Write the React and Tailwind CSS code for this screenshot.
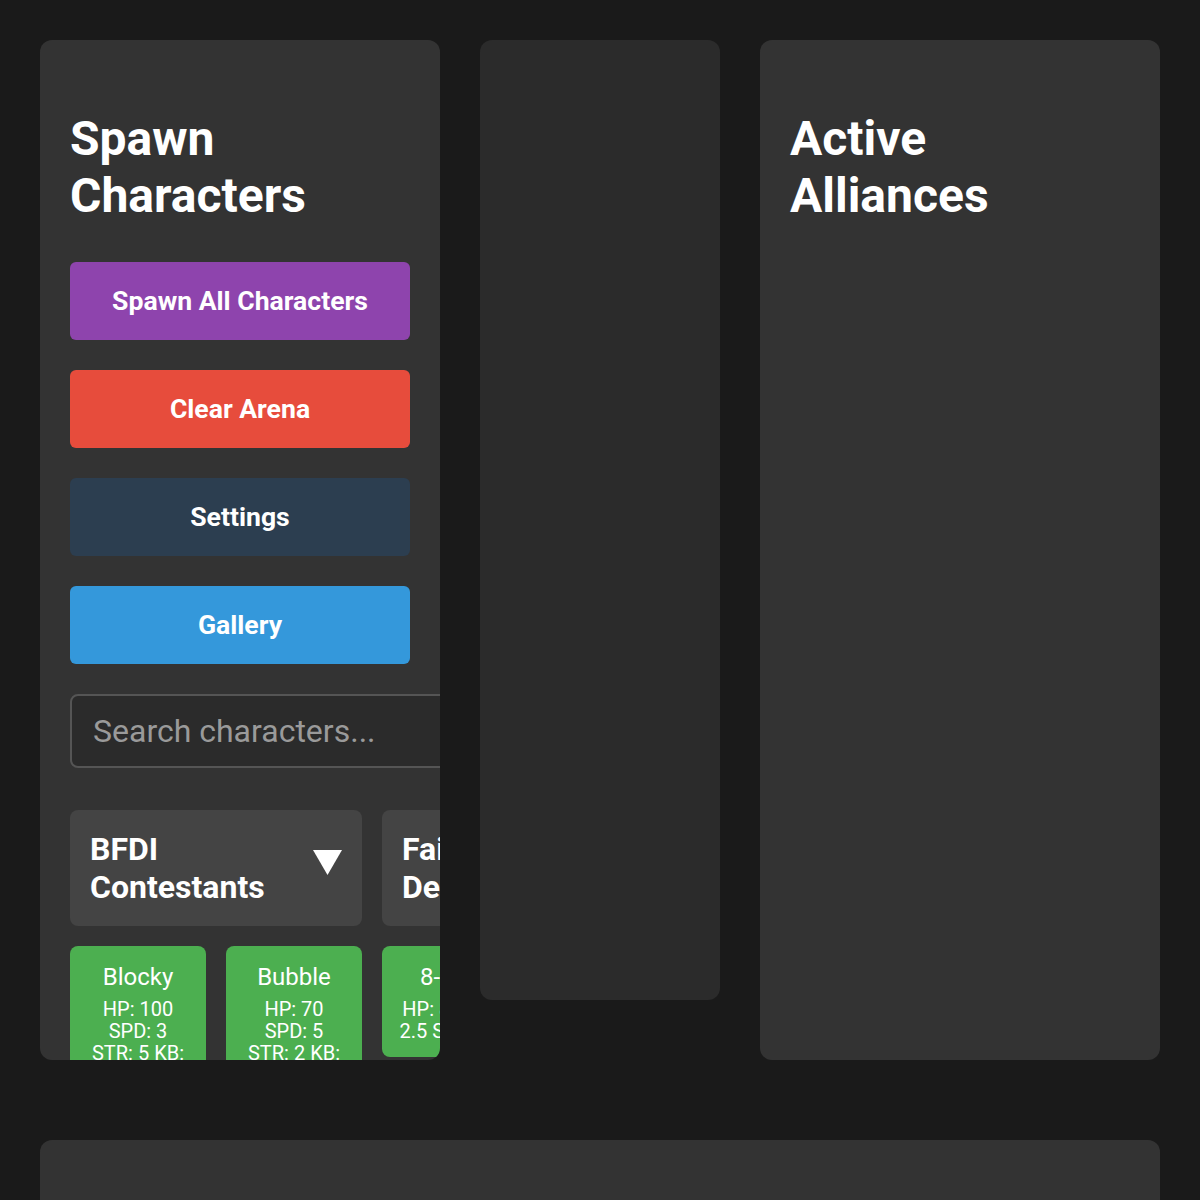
import React, { useState } from 'react';

const actions = [
    { label: 'Spawn All Characters', color: 'bg-[#8e44ad]' },
    { label: 'Clear Arena', color: 'bg-[#e74c3c]' },
    { label: 'Settings', color: 'bg-[#2c3e50]' },
    { label: 'Gallery', color: 'bg-[#3498db]' },
];

const categories = ['BFDI Contestants', 'Fairytale Designs'];

const characters = [
    { name: 'Blocky', hp: 100, spd: 3, str: 5, kb: 1.2 },
    { name: 'Bubble', hp: 70, spd: 5, str: 2, kb: 0.8 },
    { name: '8-Ball', hp: 8, spd: 2.5, str: 10 },
];

const Triangle = () => (
    <svg width="29" height="25" viewBox="0 0 29 25" className="shrink-0 mb-[11px]">
        <polygon points="0,0 29,0 14.5,25" fill="#ffffff" />
    </svg>
);

const CharacterCard = ({ c }) => (
    <div className="w-[136px] shrink-0 self-start bg-[#4caf50] rounded-lg px-[17px] pt-[17px] pb-[15px] text-white text-center">
        <div className="text-[24px] leading-[1.2]">{c.name}</div>
        <div className="mt-[6px] text-[20px] leading-[22px]">
            HP: {c.hp} SPD: {c.spd} STR: {c.str}{c.kb !== undefined && ` KB: ${c.kb}`}
        </div>
    </div>
);

const SpawnPanel = () => {
    const [query, setQuery] = useState('');

    return (
        <div className="w-[400px] h-[1020px] shrink-0 bg-[#333333] rounded-xl p-[30px] overflow-hidden">
            <h2 className="text-[48px] leading-[normal] font-bold text-white mt-10 mb-[38px]">Spawn Characters</h2>
            <div className="flex flex-col gap-[30px]">
                {actions.map((a) => (
                    <button
                        key={a.label}
                        className={`${a.color} w-[340px] h-[78px] rounded-md text-white text-[26.6px] font-bold`}
                    >
                        {a.label}
                    </button>
                ))}
                <input
                    value={query}
                    onChange={(e) => setQuery(e.target.value)}
                    placeholder="Search characters..."
                    className="w-[384px] h-[74px] shrink-0 bg-[#2b2b2b] border-2 border-[#555555] rounded-lg px-[21px] text-[32px] text-white placeholder:text-[#9a9a9a] outline-none"
                />
            </div>
            <div className="flex gap-5 mt-[42px]">
                {categories.map((cat) => (
                    <div
                        key={cat}
                        className="w-[292px] h-[116px] shrink-0 bg-[#444444] rounded-lg p-5 flex items-center justify-between gap-3"
                    >
                        <span className="text-[32px] leading-[1.2] font-bold text-white">{cat}</span>
                        <Triangle />
                    </div>
                ))}
            </div>
            <div className="flex items-start gap-5 mt-5">
                {characters.map((c) => (
                    <CharacterCard key={c.name} c={c} />
                ))}
            </div>
        </div>
    );
};

export default function App() {
    return (
        <div className="min-h-screen bg-[#1a1a1a] p-10 font-['Roboto',sans-serif]">
            <div className="flex items-start gap-10">
                <SpawnPanel />
                <div className="w-[240px] h-[960px] shrink-0 bg-[#2b2b2b] rounded-xl" />
                <div className="w-[400px] h-[1020px] shrink-0 bg-[#333333] rounded-xl px-[30px] py-[30px]">
                    <h2 className="text-[48px] leading-[normal] font-bold text-white mt-10 mb-[38px]">Active Alliances</h2>
                </div>
            </div>
            <div className="mt-20 h-[300px] bg-[#333333] rounded-xl" />
        </div>
    );
}
